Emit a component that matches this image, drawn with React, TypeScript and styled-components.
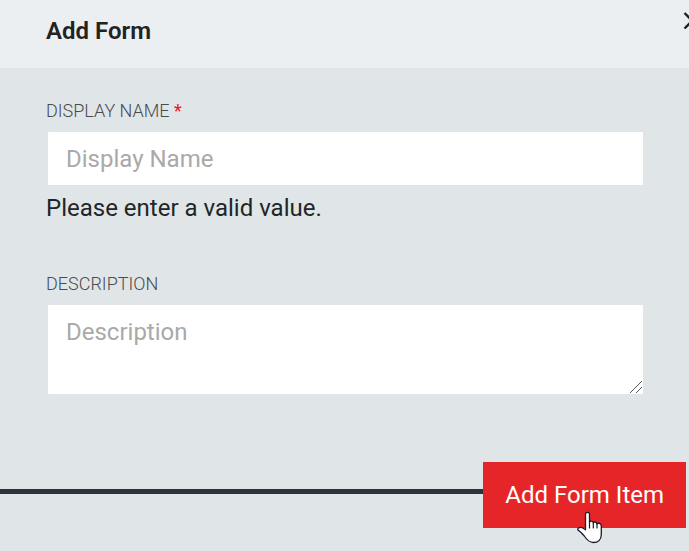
import React from "react";
import styled, { createGlobalStyle } from "styled-components";

const GlobalStyle = createGlobalStyle`
  * { box-sizing: border-box; }
  body {
    margin: 0;
    background: #e0e5e8;
    color: #212529;
    font-family: Roboto, "Liberation Sans", sans-serif;
  }
`;

const Dialog = styled.form`
  display: flex;
  flex-direction: column;
  min-height: 100vh;
  overflow: hidden;
`;

const Header = styled.header`
  display: flex;
  align-items: flex-start;
  justify-content: space-between;
  height: 68px;
  padding: 12px 0 0 46px;
  background: #ebeff2;
`;

const Title = styled.h1`
  margin: 4px 0 0;
  font-size: 24px;
  font-weight: 600;
  line-height: 30px;
  color: #222;
`;

const CloseButton = styled.button`
  display: flex;
  flex: none;
  margin-right: -12px;
  padding: 0;
  border: 0;
  background: none;
  color: #1d2126;
`;

const Fields = styled.div`
  display: flex;
  flex-direction: column;
  gap: 50px;
  padding: 32px 46px 0;
`;

const Field = styled.div`
  display: flex;
  flex-direction: column;
`;

const Label = styled.label`
  margin-bottom: 10px;
  font-size: 18px;
  line-height: 22px;
  color: #484c4f;
  font-weight: 300;
`;

const Required = styled.span`
  color: #f5121d;
  font-weight: 400;
`;

const controlStyle = `
  border: 0;
  border-radius: 1px;
  background: #fff;
  color: #212529;
  font-family: inherit;
  font-size: 24px;
  font-weight: 400;
  line-height: 30px;
  outline: none;
  &::placeholder { color: #a9a9a9; opacity: 1; }
`;

const TextInput = styled.input`
  ${controlStyle}
  height: 53px;
  margin-left: 2px;
  padding: 0 18px;
`;

const TextAreaFrame = styled.div`
  position: relative;
  display: flex;
  margin-left: 2px;
`;

const TextArea = styled.textarea`
  ${controlStyle}
  flex: 1;
  min-width: 0;
  height: 89px;
  padding: 12px 18px;
  resize: vertical;
  &::-webkit-resizer { background: transparent; }
`;

const Grip = styled.svg`
  position: absolute;
  right: 0;
  bottom: 0;
  pointer-events: none;
`;

const Message = styled.p`
  margin: 8px 0 0;
  font-size: 24px;
  line-height: 30px;
`;

const Actions = styled.footer`
  display: flex;
  align-items: center;
  margin-top: 68px;
  padding-right: 3px;
`;

const Rule = styled.div`
  flex: 1;
  height: 5px;
  margin-bottom: 7px;
  background: #2d323b;
`;

const SubmitButton = styled.button`
  position: relative;
  height: 66px;
  padding: 0 22px;
  border: 0;
  background: #e62528;
  color: #fff;
  font-family: inherit;
  font-size: 24px;
  font-weight: 400;
  line-height: 30px;
  white-space: nowrap;
  cursor: pointer;
`;

const Pointer = styled.svg`
  position: absolute;
  top: 49px;
  left: 94px;
`;

export default function App() {
  return (
    <>
      <GlobalStyle />
      <Dialog noValidate onSubmit={(e: React.FormEvent) => e.preventDefault()}>
        <Header>
          <Title>Add Form</Title>
          <CloseButton type="button" aria-label="Close">
            <svg width="18" height="18" viewBox="0 0 18 18" fill="none" stroke="currentColor" strokeWidth="2.4">
              <path d="M1.5 1 17 16.5M17 1 1.5 16.5" />
            </svg>
          </CloseButton>
        </Header>
        <Fields>
          <Field>
            <Label htmlFor="display-name">
              DISPLAY NAME <Required>*</Required>
            </Label>
            <TextInput id="display-name" placeholder="Display Name" required aria-describedby="display-name-message" />
            <Message id="display-name-message">Please enter a valid value.</Message>
          </Field>
          <Field>
            <Label htmlFor="description">DESCRIPTION</Label>
            <TextAreaFrame>
              <TextArea id="description" placeholder="Description" />
              <Grip width="14" height="14" viewBox="0 0 14 14" aria-hidden="true">
                <path d="M1 13 13 1M7 13 13 7" fill="none" stroke="#555" strokeWidth="1" />
              </Grip>
            </TextAreaFrame>
          </Field>
        </Fields>
        <Actions>
          <Rule />
          <SubmitButton type="submit">
            Add Form Item
            <Pointer width="27" height="33" viewBox="0 0 27 33" aria-hidden="true">
              <path
                d="M8.5 18.8V3.2C8.5 .7 12.5.7 12.5 3.2V11C13.2 9.8 16 9.9 16.3 11.7C17.2 10.5 19.7 10.8 20 12.8C21.1 11.8 24.3 12.2 24.3 15V23.5C24.3 28.6 21 31.5 16.3 31.5C11.9 31.5 9.6 28.5 7.3 25L3.8 21.2L.9 18.9C.1 16.8 3.8 15.8 5.8 17Z"
                fill="#fff"
                stroke="#1c1b2b"
                strokeWidth="1.3"
                strokeLinejoin="round"
              />
              <path d="M12.5 10.5V17M16.3 11.5V17M20 12.5V17" fill="none" stroke="#1c1b2b" strokeWidth="1.2" strokeLinecap="round" />
            </Pointer>
          </SubmitButton>
        </Actions>
      </Dialog>
    </>
  );
}
